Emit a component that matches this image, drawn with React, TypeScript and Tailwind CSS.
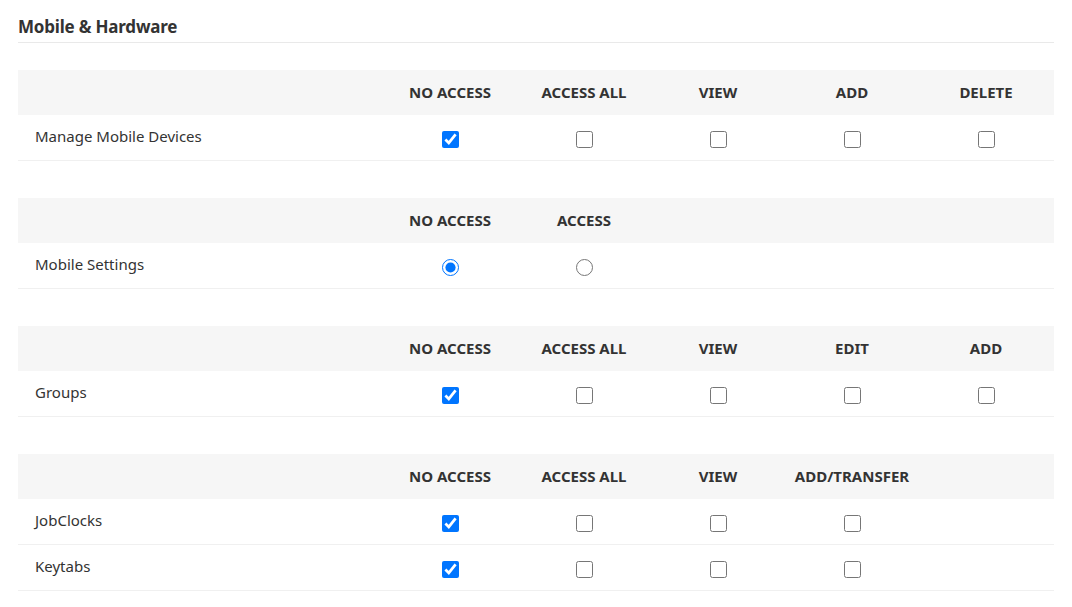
const tables = [
  { cols: ['NO ACCESS', 'ACCESS ALL', 'VIEW', 'ADD', 'DELETE'], type: 'checkbox', rows: ['Manage Mobile Devices'] },
  { cols: ['NO ACCESS', 'ACCESS'], type: 'radio', rows: ['Mobile Settings'] },
  { cols: ['NO ACCESS', 'ACCESS ALL', 'VIEW', 'EDIT', 'ADD'], type: 'checkbox', rows: ['Groups'] },
  { cols: ['NO ACCESS', 'ACCESS ALL', 'VIEW', 'ADD/TRANSFER'], type: 'checkbox', rows: ['JobClocks', 'Keytabs'] },
]

export default function App() {
  return (
    <div className="bg-white px-[18px] pt-[17px] text-[#333] font-['Roboto',sans-serif]">
      <h2 className="border-b border-[#e9e9e9] pb-[5px] text-[17px] font-bold leading-[20px] tracking-[-0.2px]">Mobile &amp; Hardware</h2>
      <div className="mt-[27px] flex flex-col gap-[37px]">
        {tables.map((t, ti) => (
          <div key={ti}>
            <div className="flex h-[45px] items-center bg-[#f6f6f6] text-[15px] font-bold">
              <div className="w-[365px]" />
              {t.cols.map((c) => (
                <div key={c} className="w-[134px] text-center">{c}</div>
              ))}
            </div>
            {t.rows.map((r) => (
              <div key={r} className="flex h-[46px] items-center border-b border-[#f0f0f0] text-[15px]">
                <div className="w-[365px] pl-[17px] pb-[3px]">{r}</div>
                {t.cols.map((c, ci) => (
                  <div key={c} className="flex w-[134px] justify-center pt-[3px]">
                    <input
                      type={t.type}
                      name={r}
                      defaultChecked={ci === 0}
                      className="m-0 h-[17px] w-[17px]"
                    />
                  </div>
                ))}
              </div>
            ))}
          </div>
        ))}
      </div>
    </div>
  )
}
